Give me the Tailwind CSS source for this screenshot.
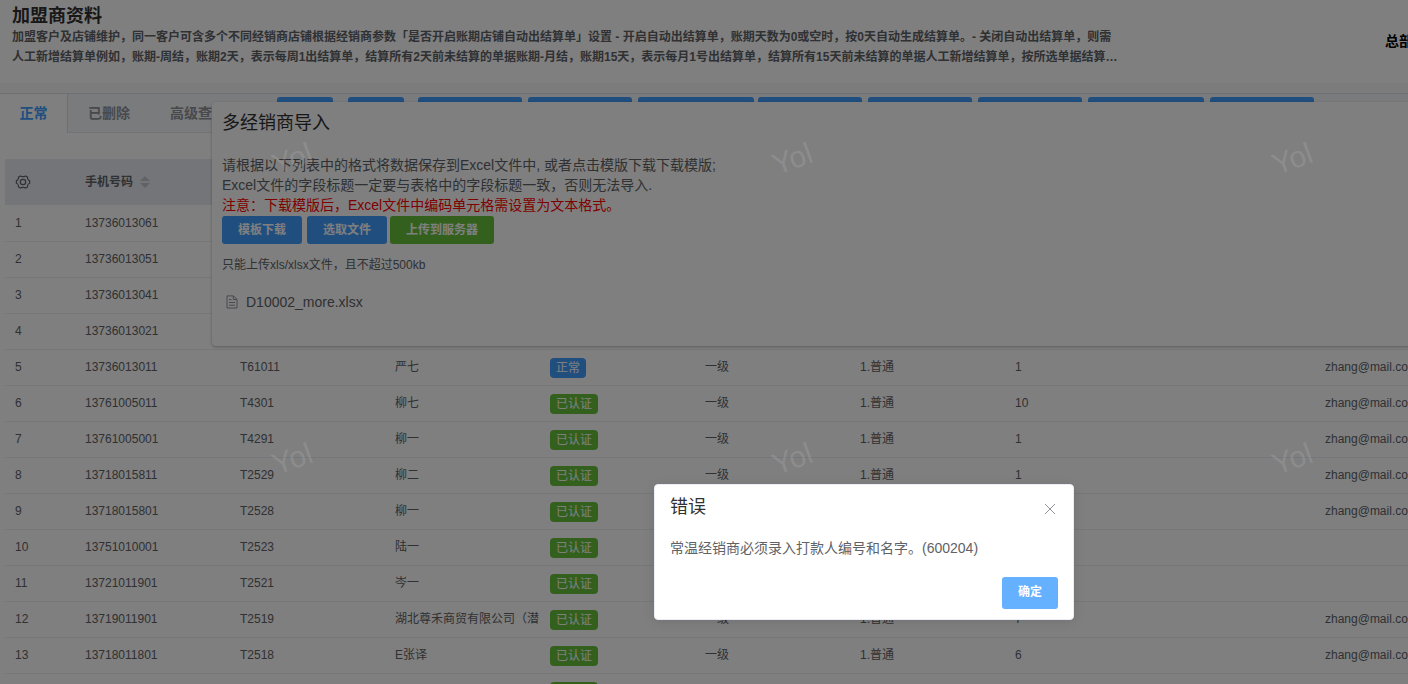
<!DOCTYPE html>
<html lang="zh-CN">
<head>
<meta charset="utf-8">
<meta name="viewport" content="width=device-width, initial-scale=1">
<title>加盟商资料</title>
<script src="https://cdn.jsdelivr.net/npm/@tailwindcss/browser@4"></script>
</head>
<body class="relative h-screen overflow-hidden bg-white font-['Liberation_Sans','Noto_Sans_CJK_SC',sans-serif] text-xs text-[#606266]">

<!-- Page header -->
<header class="flex h-[83px] items-start justify-between overflow-hidden pl-3">
  <div class="shrink-0 pt-[5px]">
    <h1 class="text-lg leading-[22px] font-bold text-[#303133]">加盟商资料</h1>
    <p class="leading-5 font-bold whitespace-nowrap">加盟客户及店铺维护，同一客户可含多个不同经销商店铺根据经销商参数「是否开启账期店铺自动出结算单」设置 - 开启自动出结算单，账期天数为0或空时，按0天自动生成结算单。- 关闭自动出结算单，则需<br>人工新增结算单例如，账期-周结，账期2天，表示每周1出结算单，结算所有2天前未结算的单据账期-月结，账期15天，表示每月1号出结算单，结算所有15天前未结算的单据人工新增结算单，按所选单据结算…</p>
  </div>
  <div class="w-[23px] shrink-0 overflow-hidden pt-[31px] text-sm leading-5 font-bold whitespace-nowrap text-black">总部</div>
</header>
<div class="h-[10px] bg-[#f8f8f8]"></div>

<!-- Tabs and toolbar -->
<nav class="flex h-10 border-t border-b border-t-[#dcdfe6] border-b-[#e4e7ed] bg-[#f5f7fa] text-sm font-bold text-[#909399]">
  <button type="button" class="-mb-px w-[68px] shrink-0 border-r border-[#dcdfe6] bg-white pb-0.5 text-[#409eff]">正常</button>
  <button type="button" class="shrink-0 px-5">已删除</button>
  <button type="button" class="shrink-0 px-5">高级查询</button>
  <div class="ml-[31px] flex shrink-0 gap-1.5 pt-[3px]">
    <button type="button" aria-label="新增" class="mr-[9px] h-7 w-14 rounded-[3px] bg-[#409eff]"></button>
    <button type="button" aria-label="导出" class="mr-2 h-7 w-14 rounded-[3px] bg-[#409eff]"></button>
    <button type="button" aria-label="操作一" class="h-7 w-[104px] rounded-[3px] bg-[#409eff]"></button>
    <button type="button" aria-label="操作二" class="h-7 w-[104px] rounded-[3px] bg-[#409eff]"></button>
    <button type="button" aria-label="操作三" class="h-7 w-[116px] rounded-[3px] bg-[#409eff]"></button>
    <button type="button" aria-label="操作四" class="-ml-0.5 h-7 w-[104px] rounded-[3px] bg-[#409eff]"></button>
    <button type="button" aria-label="操作五" class="h-7 w-[104px] rounded-[3px] bg-[#409eff]"></button>
    <button type="button" aria-label="操作六" class="h-7 w-[104px] rounded-[3px] bg-[#409eff]"></button>
    <button type="button" aria-label="操作七" class="h-7 w-[116px] rounded-[3px] bg-[#409eff]"></button>
    <button type="button" aria-label="操作八" class="h-7 w-[104px] rounded-[3px] bg-[#409eff]"></button>
  </div>
</nav>

<!-- Dealer table -->
<main class="overflow-hidden pt-[26px] pl-[5px]">
  <table class="w-[1465px] table-fixed border-collapse text-left leading-5 [&_td]:overflow-hidden [&_td]:pl-2.5 [&_td]:whitespace-nowrap [&_tbody_tr]:h-9 [&_tbody_tr]:border-b [&_tbody_tr]:border-[#ebeef5]">
    <colgroup>
      <col class="w-[70px]"><col class="w-[155px]"><col class="w-[155px]"><col class="w-[155px]"><col class="w-[155px]"><col class="w-[155px]"><col class="w-[155px]"><col class="w-[155px]"><col class="w-[155px]"><col class="w-[155px]">
    </colgroup>
    <thead>
      <tr class="h-[46px] bg-[#e9ebf2]">
        <th scope="col" class="px-2.5">
          <button type="button" aria-label="列设置" class="block">
            <svg class="h-4 w-4" viewBox="0 0 16 16" fill="none" stroke="#606266" stroke-width="1.2"><path d="M5.400 1.900c.9.9 4.300.9 5.200 0l1.900 1.100c-.3 1.500 .8 3.400 2.100 3.800v2.400c-1.300 .4-2.400 2.300-2.100 3.800l-1.900 1.100c-.9-.9-4.300-.9-5.200 0l-1.900-1.100c.3-1.500-.8-3.400-2.100-3.800v-2.400c1.300-.4 2.400-2.300 2.100-3.800z"/><circle cx="8" cy="8" r="2.700"/></svg>
          </button>
        </th>
        <th scope="col" class="px-2.5">
          <div class="flex items-center gap-[7px] font-bold">手机号码
            <svg class="h-3 w-2.5" viewBox="0 0 10 12" fill="#c0c4cc"><path d="M0 5 5 0l5 5zM0 7l5 5 5-5z"/></svg>
          </div>
        </th>
        <th></th><th></th><th></th><th></th><th></th><th></th><th></th><th></th>
      </tr>
    </thead>
    <tbody>
      <tr><td>1</td><td>13736013061</td></tr>
      <tr><td>2</td><td>13736013051</td></tr>
      <tr><td>3</td><td>13736013041</td></tr>
      <tr><td>4</td><td>13736013021</td></tr>
      <tr><td>5</td><td>13736013011</td><td>T61011</td><td>严七</td><td><span class="mt-0.5 block w-fit rounded bg-[#409eff] px-1.5 text-white">正常</span></td><td>一级</td><td>1.普通</td><td>1</td><td></td><td>zhang@mail.com</td></tr>
      <tr><td>6</td><td>13761005011</td><td>T4301</td><td>柳七</td><td><span class="mt-0.5 block w-fit rounded bg-[#67c23a] px-1.5 text-white">已认证</span></td><td>一级</td><td>1.普通</td><td>10</td><td></td><td>zhang@mail.com</td></tr>
      <tr><td>7</td><td>13761005001</td><td>T4291</td><td>柳一</td><td><span class="mt-0.5 block w-fit rounded bg-[#67c23a] px-1.5 text-white">已认证</span></td><td>一级</td><td>1.普通</td><td>1</td><td></td><td>zhang@mail.com</td></tr>
      <tr><td>8</td><td>13718015811</td><td>T2529</td><td>柳二</td><td><span class="mt-0.5 block w-fit rounded bg-[#67c23a] px-1.5 text-white">已认证</span></td><td>一级</td><td>1.普通</td><td>1</td><td></td><td>zhang@mail.com</td></tr>
      <tr><td>9</td><td>13718015801</td><td>T2528</td><td>柳一</td><td><span class="mt-0.5 block w-fit rounded bg-[#67c23a] px-1.5 text-white">已认证</span></td><td></td><td></td><td></td><td></td><td>zhang@mail.com</td></tr>
      <tr><td>10</td><td>13751010001</td><td>T2523</td><td>陆一</td><td><span class="mt-0.5 block w-fit rounded bg-[#67c23a] px-1.5 text-white">已认证</span></td><td></td><td></td><td></td><td></td><td></td></tr>
      <tr><td>11</td><td>13721011901</td><td>T2521</td><td>岑一</td><td><span class="mt-0.5 block w-fit rounded bg-[#67c23a] px-1.5 text-white">已认证</span></td><td></td><td></td><td></td><td></td><td></td></tr>
      <tr><td>12</td><td>13719011901</td><td>T2519</td><td>湖北尊禾商贸有限公司（潜</td><td><span class="mt-0.5 block w-fit rounded bg-[#67c23a] px-1.5 text-white">已认证</span></td><td>一级</td><td>1.普通</td><td>7</td><td></td><td>zhang@mail.com</td></tr>
      <tr><td>13</td><td>13718011801</td><td>T2518</td><td>E张译</td><td><span class="mt-0.5 block w-fit rounded bg-[#67c23a] px-1.5 text-white">已认证</span></td><td>一级</td><td>1.普通</td><td>6</td><td></td><td>zhang@mail.com</td></tr>
      <tr><td></td><td></td><td></td><td></td><td><span class="mt-0.5 block w-fit rounded bg-[#67c23a] px-1.5 text-white">已认证</span></td><td></td><td></td><td></td><td></td><td></td></tr>
    </tbody>
  </table>
</main>

<!-- Import dialog -->
<section role="dialog" aria-labelledby="import-title" class="absolute top-[102px] -right-2 left-[212px] rounded-sm bg-white px-2.5 pt-[9px] pb-[34px] shadow-[0_1px_3px_rgba(0,0,0,0.3)]">
  <h2 id="import-title" class="text-lg leading-6 text-[#303133]">多经销商导入</h2>
  <div class="pt-5 pb-px text-sm leading-5">
    <p>请根据以下列表中的格式将数据保存到Excel文件中, 或者点击模版下载下载模版;</p>
    <p>Excel文件的字段标题一定要与表格中的字段标题一致，否则无法导入.</p>
    <p class="text-[#ff0000]">注意：下载模版后，Excel文件中编码单元格需设置为文本格式。</p>
  </div>
  <div class="flex text-xs font-bold text-white">
    <button type="button" class="mr-[5px] h-7 rounded-[3px] bg-[#409eff] px-4">模板下载</button>
    <button type="button" class="mr-[3px] h-7 rounded-[3px] bg-[#409eff] px-4">选取文件</button>
    <button type="button" class="h-7 rounded-[3px] bg-[#67c23a] px-4">上传到服务器</button>
  </div>
  <p class="mt-[11px] leading-5">只能上传xls/xlsx文件，且不超过500kb</p>
  <div class="mt-[17px] flex items-center gap-[7px] pl-1 text-sm leading-5">
    <svg class="mr-px h-3.5 w-3" viewBox="0 0 12 14" fill="none" stroke="#909399"><path d="M1 .9h6.500l3.500 3.500v8.600h-10zM7.300 1v3.500h3.600M3 4.500h2.500M3 7.500h6M3 10.200h6"/></svg>
    <span>D10002_more.xlsx</span>
  </div>
</section>

<!-- Mask -->
<div class="absolute inset-0 bg-black/50"></div>

<!-- Error message box -->
<section role="alertdialog" aria-labelledby="error-title" class="absolute top-[484px] left-[654px] w-[420px] rounded border border-[#ebeef5] bg-white px-[15px] pb-2.5 shadow-[0_2px_12px_rgba(0,0,0,0.1)]">
  <div class="flex items-center justify-between pt-2.5">
    <h2 id="error-title" class="text-lg leading-6 text-[#303133]">错误</h2>
    <button type="button" aria-label="关闭" class="pt-1 pr-0.5">
      <svg class="h-3 w-3" viewBox="0 0 12 12" fill="none" stroke="#909399"><path d="m1 1 10 10M11 1 1 11"/></svg>
    </button>
  </div>
  <p class="pt-[17px] text-sm leading-6">常温经销商必须录入打款人编号和名字。(600204)</p>
  <div class="flex justify-end pt-[17px]">
    <button type="button" class="h-8 rounded-[3px] bg-[#66b1ff] px-4 pb-0.5 text-xs font-bold text-white">确定</button>
  </div>
</section>

<!-- Watermark -->
<div class="pointer-events-none absolute inset-0 overflow-hidden">
  <div class="ml-[272px] grid w-[1500px] grid-cols-3 pt-[143px] text-[30px] leading-8 text-[#c8c8c8]/20">
    <span class="h-[300px]"><b class="inline-block -rotate-20 font-normal">Yol</b></span>
    <span class="h-[300px]"><b class="inline-block -rotate-20 font-normal">Yol</b></span>
    <span class="h-[300px]"><b class="inline-block -rotate-20 font-normal">Yol</b></span>
    <span><b class="inline-block -rotate-20 font-normal">Yol</b></span>
    <span><b class="inline-block -rotate-20 font-normal">Yol</b></span>
    <span><b class="inline-block -rotate-20 font-normal">Yol</b></span>
  </div>
</div>
</body>
</html>
